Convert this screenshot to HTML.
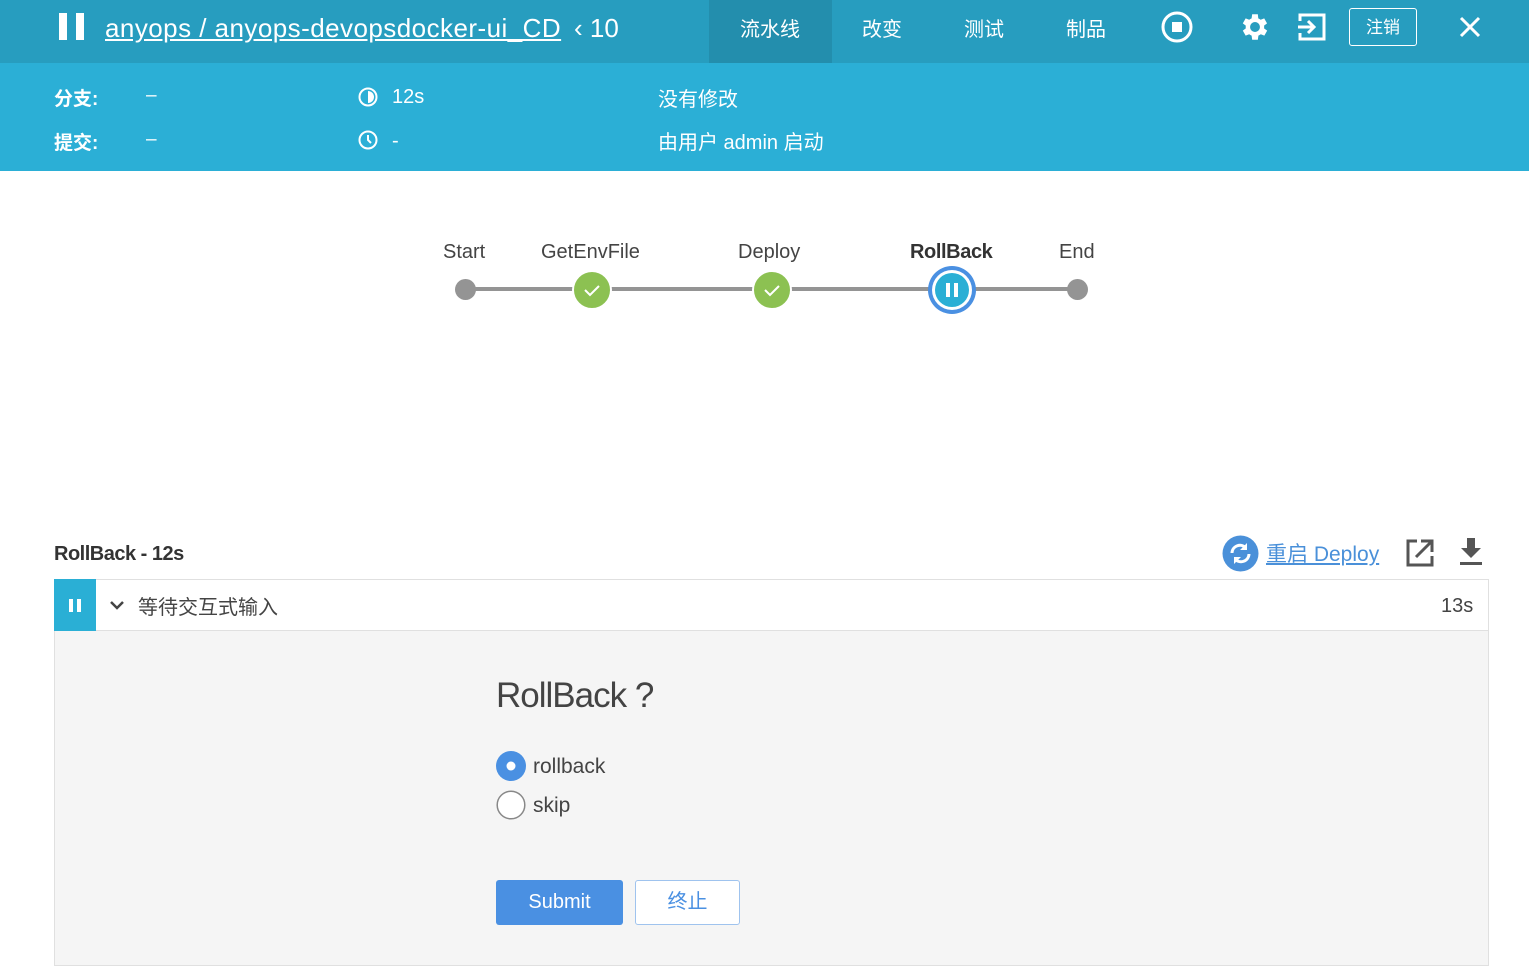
<!DOCTYPE html>
<html><head><meta charset="utf-8"><style>
*{margin:0;padding:0;box-sizing:border-box}
body{width:1529px;height:966px;overflow:hidden;background:#fff;font-family:"Liberation Sans","Noto Sans CJK SC",sans-serif;color:#444;position:relative}
.a{position:absolute;white-space:nowrap}
.top{position:absolute;left:0;top:0;width:1529px;height:63px;background:#279dbf}
.band{position:absolute;left:0;top:63px;width:1529px;height:108px;background:#2bafd6}
.w{color:#fff}
</style></head><body>
<div class="top"></div>
<div class="a" style="left:709px;top:0;width:123px;height:63px;background:#238ead"></div>
<div class="a w" style="left:59px;top:13px;width:8px;height:27px;background:#fff"></div>
<div class="a w" style="left:76px;top:13px;width:8px;height:27px;background:#fff"></div>
<div class="a w" style="left:105px;top:13px;font-size:26px;letter-spacing:0.45px;text-decoration:underline">anyops / anyops-devopsdocker-ui_CD</div>
<div class="a w" style="left:574px;top:13px;font-size:26px">‹ 10</div>
<div class="a w" style="left:740px;top:13px;font-size:20px">流水线</div>
<div class="a w" style="left:862px;top:13px;font-size:20px">改变</div>
<div class="a w" style="left:964px;top:13px;font-size:20px">测试</div>
<div class="a w" style="left:1066px;top:13px;font-size:20px">制品</div>
<svg class="a" style="left:1160px;top:10px" width="34" height="34"><circle cx="17" cy="17" r="14" fill="none" stroke="#fff" stroke-width="3"/><rect x="12" y="12" width="10" height="10" fill="#fff"/></svg>
<svg class="a" style="left:1238px;top:10px" width="34" height="34" viewBox="0 0 24 24"><path fill="#fff" d="M19.4 13a7.5 7.5 0 0 0 0-2l2.1-1.6-2-3.5-2.5 1a7.4 7.4 0 0 0-1.7-1L15 3h-4l-.4 2.9a7.4 7.4 0 0 0-1.7 1l-2.5-1-2 3.5L6.5 11a7.5 7.5 0 0 0 0 2l-2.1 1.6 2 3.5 2.5-1a7.4 7.4 0 0 0 1.7 1L11 21h4l.4-2.9a7.4 7.4 0 0 0 1.7-1l2.5 1 2-3.5zM13 15.5a3.5 3.5 0 1 1 0-7 3.5 3.5 0 0 1 0 7z" transform="translate(-1 0)"/></svg>
<svg class="a" style="left:1296px;top:12px" width="32" height="30"><path d="M4 9V3h24v24H4v-6" fill="none" stroke="#fff" stroke-width="3"/><path d="M2 15h16M12 9l6 6-6 6" fill="none" stroke="#fff" stroke-width="3"/></svg>
<div class="a w" style="left:1349px;top:8px;width:68px;height:38px;border:1px solid #fff;border-radius:3px;font-size:17px;text-align:center;line-height:38px">注销</div>
<svg class="a" style="left:1458px;top:15px" width="24" height="24"><path d="M3 3l18 18M21 3L3 21" stroke="#fff" stroke-width="3"/></svg>
<div class="band"></div>
<div class="a w" style="left:54px;top:84px;font-size:19px;font-weight:bold">分支:</div>
<div class="a w" style="left:54px;top:128px;font-size:19px;font-weight:bold">提交:</div>
<div class="a w" style="left:146px;top:85px;font-size:19px">–</div>
<div class="a w" style="left:146px;top:129px;font-size:19px">–</div>
<svg class="a" style="left:357px;top:86px" width="22" height="22"><circle cx="11" cy="11" r="8.5" fill="none" stroke="#fff" stroke-width="2"/><path d="M11 5a6 6 0 0 1 0 12z" fill="#fff"/></svg>
<svg class="a" style="left:357px;top:129px" width="22" height="22"><circle cx="11" cy="11" r="8.5" fill="none" stroke="#fff" stroke-width="2"/><path d="M11 6v5l3 3" fill="none" stroke="#fff" stroke-width="2"/></svg>
<div class="a w" style="left:392px;top:86px;font-size:20px">12s</div>
<div class="a w" style="left:392px;top:130px;font-size:20px">-</div>
<div class="a w" style="left:658px;top:83px;font-size:20px">没有修改</div>
<div class="a w" style="left:658px;top:126px;font-size:20px">由用户 admin 启动</div>

<div class="a" style="left:466px;top:287px;width:612px;height:4px;background:#949494"></div>
<div class="a" style="left:443px;top:241px;font-size:20px">Start</div>
<div class="a" style="left:541px;top:241px;font-size:20px">GetEnvFile</div>
<div class="a" style="left:738px;top:241px;font-size:20px">Deploy</div>
<div class="a" style="left:910px;top:241px;font-size:20px;font-weight:bold;color:#333;letter-spacing:-0.4px">RollBack</div>
<div class="a" style="left:1059px;top:241px;font-size:20px">End</div>
<div class="a" style="left:455px;top:279px;width:21px;height:21px;border-radius:50%;background:#949494"></div>
<div class="a" style="left:1067px;top:279px;width:21px;height:21px;border-radius:50%;background:#949494"></div>
<svg class="a" style="left:571px;top:269px" width="42" height="42"><circle cx="21" cy="21" r="19" fill="#8cc152" stroke="#fff" stroke-width="2"/><path d="M14 21l5 5 9-9" fill="none" stroke="#fff" stroke-width="2"/></svg>
<svg class="a" style="left:751px;top:269px" width="42" height="42"><circle cx="21" cy="21" r="19" fill="#8cc152" stroke="#fff" stroke-width="2"/><path d="M14 21l5 5 9-9" fill="none" stroke="#fff" stroke-width="2"/></svg>
<svg class="a" style="left:926px;top:264px" width="52" height="52"><circle cx="26" cy="26" r="24" fill="#4a90e2"/><circle cx="26" cy="26" r="20" fill="#fff"/><circle cx="26" cy="26" r="17" fill="#2aafd5"/><rect x="20" y="19" width="4" height="14" fill="#fff"/><rect x="28" y="19" width="4" height="14" fill="#fff"/></svg>

<div class="a" style="left:54px;top:543px;font-size:20px;font-weight:bold;color:#333;letter-spacing:-0.5px">RollBack - 12s</div>
<svg class="a" style="left:1222px;top:535px" width="37" height="37"><circle cx="18.5" cy="18.5" r="18" fill="#4a90d9"/><path d="M10 18a8 8 0 0 1 14-5M27 19a8 8 0 0 1-14 5" fill="none" stroke="#fff" stroke-width="3"/><path d="M25 8v7h-7zM12 29v-7h7z" fill="#fff"/></svg>
<div class="a" style="left:1266px;top:538px;font-size:21px;color:#4a90d9;text-decoration:underline">重启 Deploy</div>
<svg class="a" style="left:1405px;top:538px" width="30" height="30"><path d="M12 3H3v24h24v-9" fill="none" stroke="#555" stroke-width="3"/><path d="M11 19L26 4M16 3h11v11" fill="none" stroke="#555" stroke-width="3"/></svg>
<svg class="a" style="left:1459px;top:538px" width="24" height="28"><path d="M8 0h8v10h6L12 20 2 10h6z" fill="#555"/><rect x="1" y="24" width="22" height="3" fill="#555"/></svg>

<div class="a" style="left:54px;top:579px;width:1435px;height:387px;background:#f5f5f5;border:1px solid #e0e0e0"></div>
<div class="a" style="left:54px;top:579px;width:1435px;height:52px;background:#fff;border:1px solid #e0e0e0"></div>
<div class="a" style="left:54px;top:579px;width:42px;height:52px;background:#2aafd5"></div>
<div class="a" style="left:69px;top:599px;width:4px;height:13px;background:#fff"></div>
<div class="a" style="left:77px;top:599px;width:4px;height:13px;background:#fff"></div>
<svg class="a" style="left:109px;top:598px" width="16" height="14"><path d="M2 4l6 6 6-6" fill="none" stroke="#444" stroke-width="2.5"/></svg>
<div class="a" style="left:138px;top:591px;font-size:20px">等待交互式输入</div>
<div class="a" style="left:1441px;top:595px;font-size:20px">13s</div>

<div class="a" style="left:496px;top:676px;font-size:35px;color:#444;letter-spacing:-1px">RollBack ?</div>
<svg class="a" style="left:496px;top:751px" width="30" height="30"><circle cx="15" cy="15" r="15" fill="#4a90e2"/><circle cx="15" cy="15" r="4.5" fill="#fff"/></svg>
<div class="a" style="left:533px;top:755px;font-size:21px">rollback</div>
<svg class="a" style="left:496px;top:790px" width="30" height="30"><circle cx="15" cy="15" r="13.8" fill="#fff" stroke="#888" stroke-width="1.5"/></svg>
<div class="a" style="left:533px;top:794px;font-size:21px">skip</div>
<div class="a" style="left:496px;top:880px;width:127px;height:45px;background:#4a90e2;border-radius:3px;color:#fff;font-size:20px;text-align:center;line-height:45px">Submit</div>
<div class="a" style="left:635px;top:880px;width:105px;height:45px;background:#fff;border:1px solid #9fc3ee;border-radius:3px;color:#4a90e2;font-size:20px;text-align:center;line-height:43px">终止</div>
</body></html>
